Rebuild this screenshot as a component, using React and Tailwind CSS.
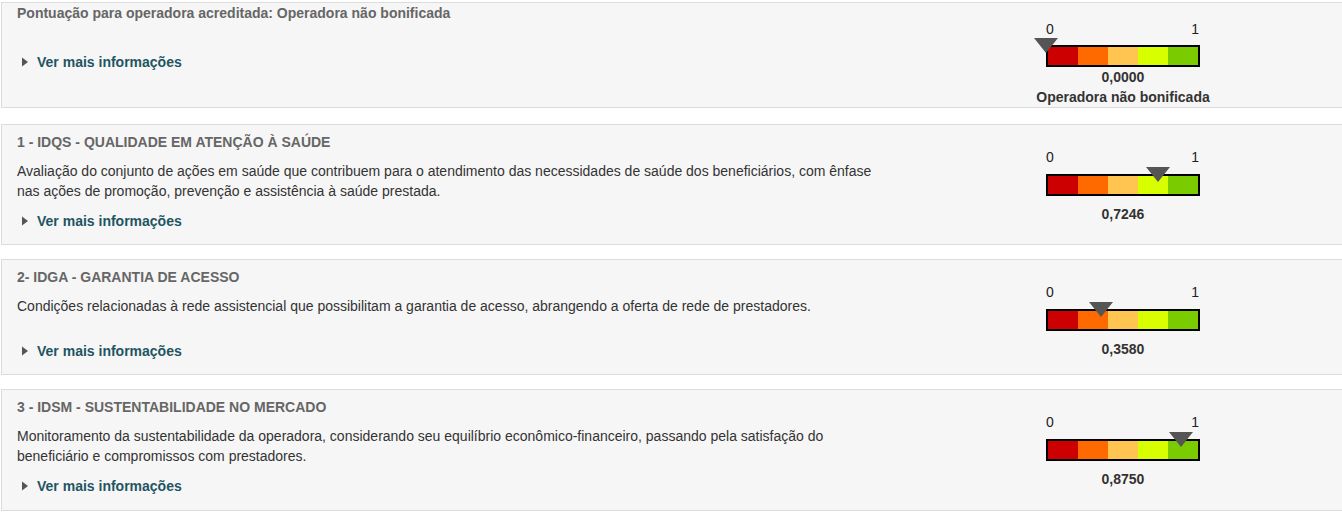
import React from "react";

const COLORS = ["#cc0000", "#ff6a00", "#ffc550", "#d8ff00", "#7acc00"];

function Caret() {
  return (
    <svg width="6" height="10" viewBox="0 0 6 10" className="shrink-0">
      <path d="M0 0.5 L6 5 L0 9.5 Z" fill="#555" />
    </svg>
  );
}

function Gauge({ value, valueText, text, colMt, barMt, valueMt }) {
  return (
    <div className={`w-[184px] shrink-0 flex flex-col items-center ${colMt}`}>
      <div className="w-[154px] flex justify-between text-[14px] leading-[15px] text-[#222]">
        <span>0</span>
        <span className="mr-[1px]">1</span>
      </div>
      <div className={`relative w-[154px] h-[22px] border-2 border-black flex ${barMt}`}>
        {COLORS.map((c) => (
          <div key={c} className="flex-1 h-full" style={{ backgroundColor: c }} />
        ))}
        <svg
          width="24"
          height="15"
          viewBox="0 0 24 15"
          className="absolute top-[-9px]"
          style={{ left: `${value * 154 - 2 - 12}px` }}
        >
          <path d="M0 0 L24 0 L12 15 Z" fill="#555" />
        </svg>
      </div>
      <div className={`font-bold text-[14px] leading-[16px] text-[#333] ${valueMt}`}>{valueText}</div>
      {text && <div className="mt-[4px] font-bold text-[14px] leading-[16px] text-[#333]">{text}</div>}
    </div>
  );
}

function VerMais({ mt }) {
  return (
    <div className={`flex items-center h-[20px] ${mt}`}>
      <span className="ml-[5px] mr-[9px] flex items-center">
        <Caret />
      </span>
      <span className="font-bold text-[14px] leading-[20px] text-[#1f5562]">Ver mais informações</span>
    </div>
  );
}

function Panel({ cls, title, desc, verMt, gauge }) {
  return (
    <div className={`w-[1400px] ml-[1px] bg-[#f6f6f6] border border-[#dcdcdc] flex items-start pl-[15px] ${cls}`}>
      <div className="w-[1014px] shrink-0">
        <div className="font-bold text-[14px] leading-[20px] text-[#666]">{title}</div>
        {desc && (
          <div className="mt-[9px] w-[870px] text-[14px] leading-[20px] text-[#333]">{desc}</div>
        )}
        <VerMais mt={verMt} />
      </div>
      <Gauge {...gauge} />
    </div>
  );
}

export default function App() {
  return (
    <div className="w-[1342px] h-[522px] overflow-hidden bg-white pt-[2px]" style={{ fontFamily: '"Liberation Sans", Arial, sans-serif' }}>
      <Panel
        cls="pt-0 pb-[2px]"
        title="Pontuação para operadora acreditada: Operadora não bonificada"
        verMt="mt-[29px]"
        gauge={{
          value: 0,
          valueText: "0,0000",
          text: "Operadora não bonificada",
          colMt: "mt-[19px]",
          barMt: "mt-[8px]",
          valueMt: "mt-[2px]",
        }}
      />
      <Panel
        cls="mt-[16px] pt-[7px] pb-[13px]"
        title="1 - IDQS - QUALIDADE EM ATENÇÃO À SAÚDE"
        desc="Avaliação do conjunto de ações em saúde que contribuem para o atendimento das necessidades de saúde dos beneficiários, com ênfase nas ações de promoção, prevenção e assistência à saúde prestada."
        verMt="mt-[10px]"
        gauge={{
          value: 0.7246,
          valueText: "0,7246",
          colMt: "mt-[18px]",
          barMt: "mt-[9px]",
          valueMt: "mt-[10px]",
        }}
      />
      <Panel
        cls="mt-[14px] pt-[7px] pb-[13px]"
        title="2- IDGA - GARANTIA DE ACESSO"
        desc="Condições relacionadas à rede assistencial que possibilitam a garantia de acesso, abrangendo a oferta de rede de prestadores."
        verMt="mt-[25px]"
        gauge={{
          value: 0.358,
          valueText: "0,3580",
          colMt: "mt-[18px]",
          barMt: "mt-[9px]",
          valueMt: "mt-[10px]",
        }}
      />
      <Panel
        cls="mt-[14px] pt-[7px] pb-[14px]"
        title="3 - IDSM - SUSTENTABILIDADE NO MERCADO"
        desc="Monitoramento da sustentabilidade da operadora, considerando seu equilíbrio econômico-financeiro, passando pela satisfação do beneficiário e compromissos com prestadores."
        verMt="mt-[10px]"
        gauge={{
          value: 0.875,
          valueText: "0,8750",
          colMt: "mt-[18px]",
          barMt: "mt-[9px]",
          valueMt: "mt-[10px]",
        }}
      />
    </div>
  );
}
